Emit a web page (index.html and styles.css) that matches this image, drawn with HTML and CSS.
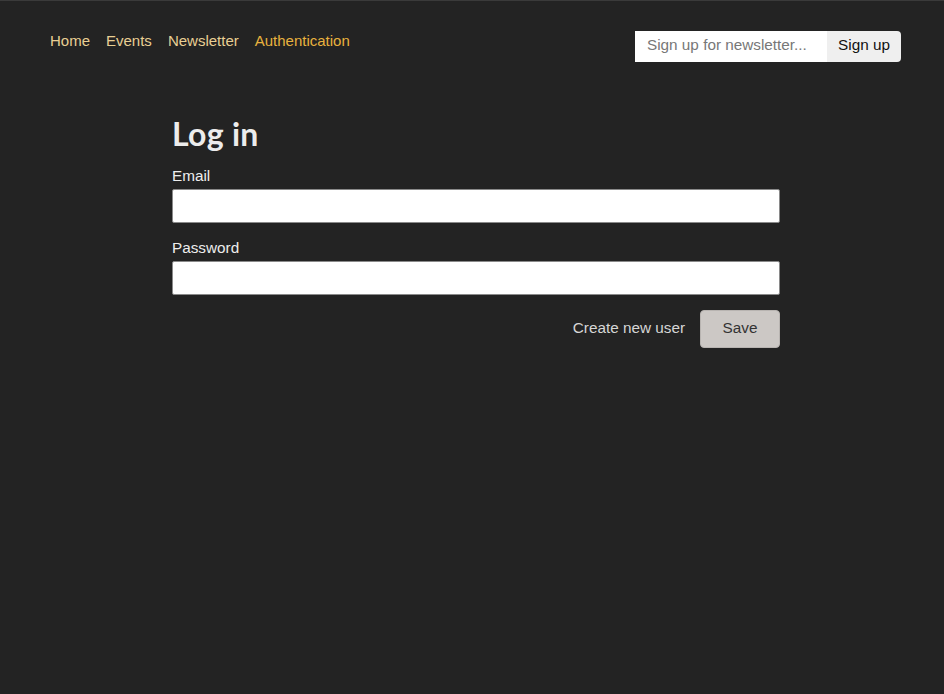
FILE: index.html
```html
<!DOCTYPE html>
<html>
<head>
<meta charset="utf-8">
<link rel="stylesheet" href="styles.css">
</head>
<body>
<header class="top">
  <nav class="nav">
    <a class="nav-link" href="#">Home</a>
    <a class="nav-link" href="#">Events</a>
    <a class="nav-link" href="#">Newsletter</a>
    <a class="nav-link active" href="#">Authentication</a>
  </nav>
  <form class="signup">
    <input class="signup-input" type="email" placeholder="Sign up for newsletter...">
    <button class="signup-btn" type="button">Sign up</button>
  </form>
</header>
<main class="main">
  <h1 class="title">Log in</h1>
  <form class="login">
    <label class="field">
      <span class="label">Email</span>
      <input class="input" type="email">
    </label>
    <label class="field">
      <span class="label">Password</span>
      <input class="input" type="password">
    </label>
    <div class="actions">
      <a class="create" href="#">Create new user</a>
      <button class="save" type="button">Save</button>
    </div>
  </form>
</main>
</body>
</html>
```
FILE: styles.css
```css
* { box-sizing: border-box; }
html, body { height: 100%; }
body {
  margin: 0;
  background: #232323;
  border-top: 1px solid #3a3a3a;
  font-family: "Liberation Sans", Arial, sans-serif;
  color: #e6e6e6;
}
.top {
  display: flex;
  justify-content: space-between;
  align-items: flex-start;
  padding: 30px 43px 0 50px;
}
.nav {
  display: flex;
  gap: 16px;
}
.nav-link {
  color: #e9cf93;
  text-decoration: none;
  font-size: 15px;
  line-height: 20px;
}
.nav-link.active { color: #e8b23e; }
.signup {
  display: flex;
  height: 31px;
  border-radius: 0 4px 4px 0;
  overflow: hidden;
}
.signup-input {
  width: 192px;
  border: none;
  outline: none;
  padding: 0 12px 3px;
  font-family: inherit;
  font-size: 15.3px;
  background: #fff;
  color: #222;
}
.signup-input::placeholder { color: #777; }
.signup-btn {
  width: 74px;
  border: none;
  background: #efefef;
  color: #111;
  font-family: inherit;
  font-size: 15.3px;
  padding: 0 0 3px;
}
.main {
  padding: 52px 164px 0 172px;
}
.title {
  margin: 0 0 13px;
  font-family: Lato, "Open Sans", sans-serif;
  font-weight: 700;
  font-size: 32px;
  line-height: 40px;
  color: #ececec;
  letter-spacing: 0.3px;
}
.login {
  display: flex;
  flex-direction: column;
  gap: 16px;
}
.field {
  display: flex;
  flex-direction: column;
  gap: 4px;
}
.label {
  font-size: 15.3px;
  line-height: 18px;
  color: #ededed;
}
.input {
  height: 34px;
  border: 1px solid #8a8a8a;
  border-radius: 2px;
  background: #fff;
  font-family: inherit;
  font-size: 15px;
  padding: 0 8px;
}
.actions {
  display: flex;
  justify-content: flex-end;
  align-items: center;
  gap: 15px;
  margin-top: -1px;
}
.create {
  color: #d6d6d6;
  text-decoration: none;
  font-size: 15.3px;
  padding-bottom: 3px;
}
.save {
  width: 80px;
  height: 38px;
  border: 1px solid #b8b4b1;
  border-radius: 4px;
  background: #ccc8c5;
  color: #333;
  font-family: inherit;
  font-size: 15.3px;
  padding: 0 0 3px;
}
```
